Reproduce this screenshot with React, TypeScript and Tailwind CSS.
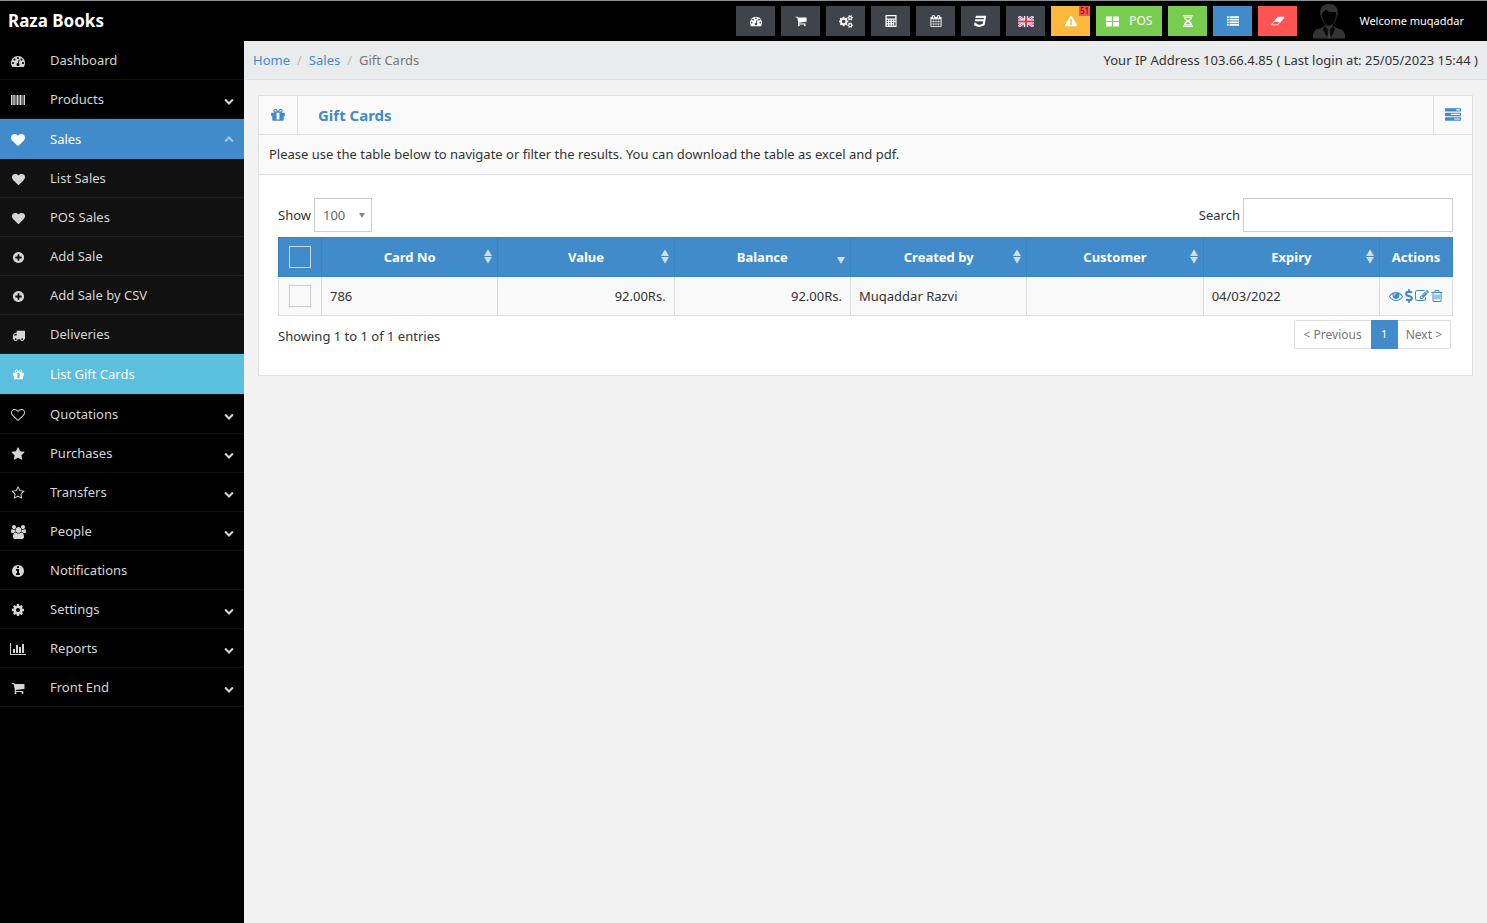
import React, { useState } from 'react';
import { FaCss3, FaDollarSign, FaExclamationTriangle } from 'react-icons/fa';
import clsx from 'clsx';

type Glyph = { width: number; d: string };

const GLYPHS: Record<string, Glyph> = {
  dashboard: { width: 1792, d: 'M384 1152q0-53-37.5-90.5t-90.5-37.5-90.5 37.5-37.5 90.5 37.5 90.5 90.5 37.5 90.5-37.5 37.5-90.5zm192-448q0-53-37.5-90.5t-90.5-37.5-90.5 37.5-37.5 90.5 37.5 90.5 90.5 37.5 90.5-37.5 37.5-90.5zm428 481l101-382q6-26-7.5-48.5t-38.5-29.5-48 6.5-30 39.5l-101 382q-60 5-107 43.5t-63 98.5q-20 77 20 146t117 89 146-20 89-117q16-60-6-117t-72-91zm660-33q0-53-37.5-90.5t-90.5-37.5-90.5 37.5-37.5 90.5 37.5 90.5 90.5 37.5 90.5-37.5 37.5-90.5zm-640-640q0-53-37.5-90.5t-90.5-37.5-90.5 37.5-37.5 90.5 37.5 90.5 90.5 37.5 90.5-37.5 37.5-90.5zm448 192q0-53-37.5-90.5t-90.5-37.5-90.5 37.5-37.5 90.5 37.5 90.5 90.5 37.5 90.5-37.5 37.5-90.5zm320 448q0 261-141 483-19 29-54 29h-1402q-35 0-54-29-141-221-141-483 0-182 71-348t191-286 286-191 348-71 348 71 286 191 191 286 71 348z' },
  barcode: { width: 1792, d: 'M0 256h192v1280h-192zM256 256h96v1280h-96zM416 256h96v1280h-96zM576 256h96v1280h-96zM736 256h192v1280h-192zM992 256h96v1280h-96zM1152 256h160v1280h-160zM1376 256h64v1280h-64zM1504 256h64v1280h-64zM1632 256h160v1280h-160z' },
  heart: { width: 1792, d: 'M896 1664q-26 0-44-18l-624-602q-10-8-27.5-26t-55.5-65.5-68-97.5-53.5-121-23.5-138q0-220 127-344t351-124q62 0 126.5 21.5t120 58 95.5 68.5 76 68q36-36 76-68t95.5-68.5 120-58 126.5-21.5q224 0 351 124t127 344q0 221-229 450l-623 600q-18 18-44 18z' },
  heartOutline: { width: 1792, d: 'M1664 596q0-81-21.5-143t-55-98.5-81.5-59.5-94-31-98-8-112 25.5-110.5 64-86.5 72-60 61.5q-18 22-49 22t-49-22q-24-28-60-61.5t-86.5-72-110.5-64-112-25.5-98 8-94 31-81.5 59.5-55 98.5-21.5 143q0 168 187 355l581 560 580-559q188-188 188-356zm128 0q0 221-229 450l-623 600q-18 18-44 18t-44-18l-624-602q-10-8-27.5-26t-55.5-65.5-68-97.5-53.5-121-23.5-138q0-220 127-344t351-124q62 0 126.5 21.5t120 58 95.5 68.5 76 68q36-36 76-68t95.5-68.5 120-58 126.5-21.5q224 0 351 124t127 344z' },
  plus: { width: 1792, d: 'M1344 960v-128q0-26-19-45t-45-19h-256v-256q0-26-19-45t-45-19h-128q-26 0-45 19t-19 45v256h-256q-26 0-45 19t-19 45v128q0 26 19 45t45 19h256v256q0 26 19 45t45 19h128q26 0 45-19t19-45v-256h256q26 0 45-19t19-45zm320-64q0 209-103 385.5t-279.5 279.5-385.5 103-385.5-103-279.5-279.5-103-385.5 103-385.5 279.5-279.5 385.5-103 385.5 103 279.5 279.5 103 385.5z' },
  truck: { width: 1792, d: 'M640 1408q0-52-38-90t-90-38-90 38-38 90 38 90 90 38 90-38 38-90zm-384-512h384v-256h-158q-13 0-22 9l-195 195q-9 9-9 22v30zm1280 512q0-52-38-90t-90-38-90 38-38 90 38 90 90 38 90-38 38-90zm256-1088v1024q0 15-4 26.5t-13.5 18.5-16.5 11.5-23.5 6-22.5 2-25.5 0-22.5-.5q0 106-75 181t-181 75-181-75-75-181h-384q0 106-75 181t-181 75-181-75-75-181h-64q-3 0-22.5.5t-25.5 0-22.5-2-23.5-6-16.5-11.5-13.5-18.5-4-26.5q0-26 19-45t45-19v-320q0-8-.5-35t0-38 2.5-34.5 6.5-37 14-30.5 22.5-30l198-198q19-19 50.5-32t58.5-13h160v-192q0-26 19-45t45-19h1024q26 0 45 19t19 45z' },
  gift: { width: 1792, d: 'M1055 1356v-716h-320v716q0 25 18 38.5t46 13.5h192q28 0 46-13.5t18-38.5zm-456-844h195l-126-161q-26-31-69-31-40 0-68 28t-28 68 28 68 68 28zm688-96q0-40-28-68t-68-28q-43 0-69 31l-125 161h194q40 0 68-28t28-68zm376 256v320q0 14-9 23t-23 9h-96v416q0 40-28 68t-68 28h-1088q-40 0-68-28t-28-68v-416h-96q-14 0-23-9t-9-23v-320q0-14 9-23t23-9h440q-93 0-158.5-65.5t-65.5-158.5 65.5-158.5 158.5-65.5q107 0 168 77l128 165 128-165q61-77 168-77 93 0 158.5 65.5t65.5 158.5-65.5 158.5-158.5 65.5h440q14 0 23 9t9 23z' },
  star: { width: 1792, d: 'M1728 647q0 22-26 48l-363 354 86 500q1 7 1 20 0 21-10.5 35.5t-30.5 14.5q-19 0-40-12l-449-236-449 236q-22 12-40 12-21 0-31.5-14.5t-10.5-35.5q0-6 2-20l86-500-364-354q-25-27-25-48 0-37 56-46l502-73 225-455q19-41 49-41t49 41l225 455 502 73q56 9 56 46z' },
  starOutline: { width: 1792, d: 'M1201 1004l306-297-422-62-189-382-189 382-422 62 306 297-73 421 378-199 377 199zm527-357q0 22-26 48l-363 354 86 500q1 7 1 20 0 50-41 50-19 0-40-12l-449-236-449 236q-22 12-40 12-21 0-31.5-14.5t-10.5-35.5q0-6 2-20l86-500-364-354q-25-27-25-48 0-37 56-46l502-73 225-455q19-41 49-41t49 41l225 455 502 73q56 9 56 46z' },
  people: { width: 1920, d: 'M593 896q-162 5-265 128h-134q-82 0-138-40.5t-56-118.5q0-353 124-353 6 0 43.5 21t97.5 42.5 119 21.5q67 0 133-23-5 37-5 66 0 139 81 256zm1071 637q0 120-73 189.5t-194 69.5h-874q-121 0-194-69.5t-73-189.5q0-53 3.5-103.5t14-109 26.5-108.5 43-97.5 62-81 85.5-53.5 111.5-20q10 0 43 21.5t73 48 107 48 135 21.5 135-21.5 107-48 73-48 43-21.5q61 0 111.5 20t85.5 53.5 62 81 43 97.5 26.5 108.5 14 109 3.5 103.5zm-1024-1277q0 106-75 181t-181 75-181-75-75-181 75-181 181-75 181 75 75 181zm704 384q0 159-112.5 271.5t-271.5 112.5-271.5-112.5-112.5-271.5 112.5-271.5 271.5-112.5 271.5 112.5 112.5 271.5zm576 225q0 78-56 118.5t-138 40.5h-134q-103-123-265-128 81-117 81-256 0-29-5-66 66 23 133 23 59 0 119-21.5t97.5-42.5 43.5-21q124 0 124 353zm-128-609q0 106-75 181t-181 75-181-75-75-181 75-181 181-75 181 75 75 181z' },
  info: { width: 1792, d: 'M1152 1376v-160q0-14-9-23t-23-9h-96v-512q0-14-9-23t-23-9h-320q-14 0-23 9t-9 23v160q0 14 9 23t23 9h96v320h-96q-14 0-23 9t-9 23v160q0 14 9 23t23 9h448q14 0 23-9t9-23zm-128-896v-160q0-14-9-23t-23-9h-192q-14 0-23 9t-9 23v160q0 14 9 23t23 9h192q14 0 23-9t9-23zm640 416q0 209-103 385.5t-279.5 279.5-385.5 103-385.5-103-279.5-279.5-103-385.5 103-385.5 279.5-279.5 385.5-103 385.5 103 279.5 279.5 103 385.5z' },
  cog: { width: 1792, d: 'M1152 896q0-106-75-181t-181-75-181 75-75 181 75 181 181 75 181-75 75-181zm512-109v222q0 12-8 23t-20 13l-185 28q-19 54-39 91 35 50 107 138 10 12 10 25t-9 23q-27 37-99 108t-94 71q-12 0-26-9l-138-108q-44 23-91 38-16 136-29 186-7 28-36 28h-222q-14 0-24.5-8.5t-11.5-21.5l-28-184q-49-16-90-37l-141 107q-10 9-25 9-14 0-25-11-126-114-165-168-7-10-7-23 0-12 8-23 15-21 51-66.5t54-70.5q-27-50-41-99l-183-27q-13-2-21-12.5t-8-23.5v-222q0-12 8-23t19-13l186-28q14-46 39-92-40-57-107-138-10-12-10-24 0-10 9-23 26-36 98.5-107.5t94.5-71.5q13 0 26 10l138 107q44-23 91-38 16-136 29-186 7-28 36-28h222q14 0 24.5 8.5t11.5 21.5l28 184q49 16 90 37l142-107q9-9 24-9 13 0 25 10 129 119 165 170 7 8 7 22 0 12-8 23-15 21-51 66.5t-54 70.5q26 50 41 98l183 28q13 2 21 12.5t8 23.5z' },
  cogs: { width: 1920, d: 'M896 896q0-106-75-181t-181-75-181 75-75 181 75 181 181 75 181-75 75-181zm768 512q0-52-38-90t-90-38-90 38-38 90q0 53 37.5 90.5t90.5 37.5 90.5-37.5 37.5-90.5zm0-1024q0-52-38-90t-90-38-90 38-38 90q0 53 37.5 90.5t90.5 37.5 90.5-37.5 37.5-90.5zm-384 421v185q0 10-7 19.5t-16 10.5l-155 24q-11 35-32 76 34 48 90 115 7 11 7 20 0 12-7 19-23 30-82.5 89.5t-78.5 59.5q-11 0-21-7l-115-90q-37 19-77 31-11 108-23 155-7 24-30 24h-186q-11 0-20-7.5t-10-17.5l-23-153q-34-10-75-31l-118 89q-7 7-20 7-11 0-21-8-144-133-144-160 0-9 7-19 10-14 41-53t47-61q-23-44-35-82l-152-24q-10-1-17-9.5t-7-19.5v-185q0-10 7-19.5t16-10.5l155-24q11-35 32-76-34-48-90-115-7-11-7-20 0-12 7-20 22-30 82-89t79-59q11 0 21 7l115 90q34-18 77-32 11-108 23-154 7-24 30-24h186q11 0 20 7.5t10 17.5l23 153q34 10 75 31l118-89q8-7 20-7 11 0 21 8 144 133 144 160 0 8-7 19-12 16-42 54t-45 60q23 48 34 82l152 23q10 2 17 10.5t7 19.5zm640 533v140q0 16-149 31-12 27-30 52 51 113 51 138 0 4-4 7-122 71-124 71-8 0-46-47t-52-68q-20 2-30 2t-30-2q-14 21-52 68t-46 47q-2 0-124-71-4-3-4-7 0-25 51-138-18-25-30-52-149-15-149-31v-140q0-16 149-31 13-29 30-52-51-113-51-138 0-4 4-7 4-2 35-20t59-34 30-16q8 0 46 46.5t52 67.5q20-2 30-2t30 2q51-71 92-112l6-2q4 0 124 70 4 3 4 7 0 25-51 138 17 23 30 52 149 15 149 31zm0-1024v140q0 16-149 31-12 27-30 52 51 113 51 138 0 4-4 7-122 71-124 71-8 0-46-47t-52-68q-20 2-30 2t-30-2q-14 21-52 68t-46 47q-2 0-124-71-4-3-4-7 0-25 51-138-18-25-30-52-149-15-149-31v-140q0-16 149-31 13-29 30-52-51-113-51-138 0-4 4-7 4-2 35-20t59-34 30-16q8 0 46 46.5t52 67.5q20-2 30-2t30 2q51-71 92-112l6-2q4 0 124 70 4 3 4 7 0 25-51 138 17 23 30 52 149 15 149 31z' },
  chart: { width: 2048, d: 'M640 896v512h-256v-512h256zm384-512v1024h-256v-1024h256zm1024 1152v128h-2048v-1536h128v1408h1920zm-640-896v768h-256v-768h256zm384-384v1152h-256v-1152h256z' },
  cart: { width: 1792, d: 'M704 1536q0 52-38 90t-90 38-90-38-38-90 38-90 90-38 90 38 38 90zm896 0q0 52-38 90t-90 38-90-38-38-90 38-90 90-38 90 38 38 90zm128-1088v512q0 24-16.5 42.5t-40.5 21.5l-1044 122q13 60 13 70 0 16-24 64h920q26 0 45 19t19 45-19 45-45 19h-1024q-26 0-45-19t-19-45q0-11 8-31.5t16-36 21.5-40 15.5-29.5l-177-823h-204q-26 0-45-19t-19-45 19-45 45-19h256q16 0 28.5 6.5t19.5 15.5 13 24.5 8 26 5.5 29.5 4.5 26h1201q26 0 45 19t19 45z' },
  chevron: { width: 1792, d: 'M1683 808l-742 741q-19 19-45 19t-45-19l-742-741q-19-19-19-45.5t19-45.5l166-165q19-19 45-19t45 19l531 531 531-531q19-19 45-19t45 19l166 165q19 19 19 45.5t-19 45.5z' },
  calculator: { width: 1792, d: 'M128 0h1536q64 0 64 64v1664q0 64-64 64h-1536q-64 0-64-64v-1664q0-64 64-64zM256 192v320h1280v-320zM256 704v192h192v-192zM640 704v192h192v-192zM1024 704v192h192v-192zM1376 704v192h192v-192zM256 1056v192h192v-192zM640 1056v192h192v-192zM1024 1056v192h192v-192zM1376 1056v544h192v-544zM256 1408v192h192v-192zM640 1408v192h192v-192zM1024 1408v192h192v-192z' },
  calendar: { width: 1792, d: 'M192 1664h288v-288h-288v288zm352 0h320v-288h-320v288zm-352-352h288v-320h-288v320zm352 0h320v-320h-320v320zm-352-384h288v-288h-288v288zm736 736h320v-288h-320v288zm-384-736h320v-288h-320v288zm768 736h288v-288h-288v288zm-384-352h320v-320h-320v320zm-352-864v-288q0-13-9.5-22.5t-22.5-9.5h-64q-13 0-22.5 9.5t-9.5 22.5v288q0 13 9.5 22.5t22.5 9.5h64q13 0 22.5-9.5t9.5-22.5zm736 864h288v-320h-288v320zm-384-384h320v-288h-320v288zm384 0h288v-288h-288v288zm32-480v-288q0-13-9.5-22.5t-22.5-9.5h-64q-13 0-22.5 9.5t-9.5 22.5v288q0 13 9.5 22.5t22.5 9.5h64q13 0 22.5-9.5t9.5-22.5zm384-64v1280q0 52-38 90t-90 38h-1408q-52 0-90-38t-38-90v-1280q0-52 38-90t90-38h128v-96q0-66 47-113t113-47h64q66 0 113 47t47 113v96h384v-96q0-66 47-113t113-47h64q66 0 113 47t47 113v96h128q52 0 90 38t38 90z' },
  tiles: { width: 1792, d: 'M0 192h832v640h-832zM960 192h832v640h-832zM0 960h832v640h-832zM960 960h832v640h-832z' },
  hourglass: { width: 1792, d: 'M192 0h1408v224h-1408zM192 1568h1408v224h-1408zM288 288h1216q0 400-400 608 400 208 400 608h-1216q0-400 400-608-400-208-400-608zM480 416q80 220 416 380 336-160 416-380zM896 1050q-270 130-330 330h660q-60-200-330-330z' },
  list: { width: 1792, d: 'M0 192h256v256h-256zM384 192h1408v256h-1408zM0 576h256v256h-256zM384 576h1408v256h-1408zM0 960h256v256h-256zM384 960h1408v256h-1408zM0 1344h256v256h-256zM384 1344h1408v256h-1408z' },
  eraser: { width: 2048, d: 'M960 1408l336-384h-768l-336 384h768zm1013-1077q15 34 9.5 71.5t-30.5 65.5l-896 1024q-38 44-96 44h-768q-38 0-69.5-20.5t-47.5-54.5q-15-34-9.5-71.5t30.5-65.5l896-1024q38-44 96-44h768q38 0 69.5 20.5t47.5 54.5z' },
  tasks: { width: 1792, d: 'M1024 1408h640v-128h-640v128zm-384-512h1024v-128h-1024v128zm640-512h384v-128h-384v128zm512 832v256q0 26-19 45t-45 19h-1664q-26 0-45-19t-19-45v-256q0-26 19-45t45-19h1664q26 0 45 19t19 45zm0-512v256q0 26-19 45t-45 19h-1664q-26 0-45-19t-19-45v-256q0-26 19-45t45-19h1664q26 0 45 19t19 45zm0-512v256q0 26-19 45t-45 19h-1664q-26 0-45-19t-19-45v-256q0-26 19-45t45-19h1664q26 0 45 19t19 45z' },
  eye: { width: 1792, d: 'M1664 960q-152-236-381-353 61 104 61 225 0 185-131.5 316.5t-316.5 131.5-316.5-131.5-131.5-316.5q0-121 61-225-229 117-381 353 133 205 333.5 326.5t434.5 121.5 434.5-121.5 333.5-326.5zm-720-384q0-20-14-34t-34-14q-125 0-214.5 89.5t-89.5 214.5q0 20 14 34t34 14 34-14 14-34q0-86 61-147t147-61q20 0 34-14t14-34zm848 384q0 34-20 69-140 230-376.5 368.5t-499.5 138.5-499.5-139-376.5-368q-20-35-20-69t20-69q140-229 376.5-368t499.5-139 499.5 139 376.5 368q20 35 20 69z' },
  edit: { width: 1792, d: 'M888 1184l116-116-152-152-116 116v56h96v96h56zm440-720q-16-16-33 1l-350 350q-17 17-1 33t33-1l350-350q17-17 1-33zm80 594v190q0 119-84.5 203.5t-203.5 84.5h-832q-119 0-203.5-84.5t-84.5-203.5v-832q0-119 84.5-203.5t203.5-84.5h832q63 0 117 25 15 7 18 23 3 17-9 29l-49 49q-14 14-32 8-23-6-45-6h-832q-66 0-113 47t-47 113v832q0 66 47 113t113 47h832q66 0 113-47t47-113v-126q0-13 9-22l64-64q15-15 35-7t20 29zm-96-738l288 288-672 672h-288v-288zm444 132l-92 92-288-288 92-92q28-28 68-28t68 28l152 152q28 28 28 68t-28 68z' },
  trash: { width: 1792, d: 'M704 736v576q0 14-9 23t-23 9h-64q-14 0-23-9t-9-23v-576q0-14 9-23t23-9h64q14 0 23 9t9 23zm256 0v576q0 14-9 23t-23 9h-64q-14 0-23-9t-9-23v-576q0-14 9-23t23-9h64q14 0 23 9t9 23zm256 0v576q0 14-9 23t-23 9h-64q-14 0-23-9t-9-23v-576q0-14 9-23t23-9h64q14 0 23 9t9 23zm128 724v-948h-896v948q0 22 7 40.5t14.5 27 10.5 8.5h832q3 0 10.5-8.5t14.5-27 7-40.5zm-672-1076h448l-48-117q-7-9-17-11h-317q-10 2-17 11zm928 32v64q0 14-9 23t-23 9h-96v948q0 83-47 143.5t-113 60.5h-832q-66 0-113-58.5t-47-141.5v-952h-96q-14 0-23-9t-9-23v-64q0-14 9-23t23-9h309l70-167q15-37 54-63t79-26h320q40 0 79 26t54 63l70 167h309q14 0 23 9t9 23z' },
};

function Icon({ name, className }: { name: string; className?: string }) {
  const { width, d } = GLYPHS[name];
  return (
    <svg viewBox={`0 0 ${width} 1792`} fill="currentColor" fillRule="evenodd" aria-hidden="true" className={clsx('shrink-0', className)}>
      <path d={d} />
    </svg>
  );
}

function Flag() {
  return (
    <svg viewBox="0 0 16 11" aria-hidden="true" className="h-[11px] w-4">
      <rect width="16" height="11" fill="#3d5aa8" />
      <path d="M0 0L16 11M16 0L0 11" stroke="#fff" strokeWidth="2.4" />
      <path d="M0 0L16 11M16 0L0 11" stroke="#e0455a" strokeWidth="0.9" />
      <path d="M8 0V11M0 5.5H16" stroke="#fff" strokeWidth="4" />
      <path d="M8 0V11M0 5.5H16" stroke="#e0364c" strokeWidth="2" />
    </svg>
  );
}

function Avatar() {
  return (
    <svg viewBox="0 0 34 36" aria-hidden="true" className="h-9 w-[34px]">
      <path d="M1 35.500C.5 30 2 27.500 6 26c4-1.300 5.500-1.800 6.500-3.500h9c1 1.700 2.500 2.200 6.500 3.500 4 1.500 5.500 4 5 9.500z" fill="#343434" />
      <path d="M12.500 23L17 27.500l4.500-4.500 1.500 3.500-4.500 9h-3l-4.500-9z" fill="#0a0a0a" />
      <path d="M15.500 27.500h3l-.7 2 1.200 6h-4l1.200-6z" fill="#404040" />
      <path d="M9.500 10c0 7.500 3 13 7.500 13s7.500-5.500 7.500-13" fill="#020202" stroke="#2e2e2e" />
      <path d="M8.500 13C7.300 5 10 1 17 1s9.700 4 8.500 12l-2-4c-4 .5-8-.5-10-2.500-1 2-2 2.500-3 3z" fill="#343434" />
    </svg>
  );
}

type MenuItem = { label: string; icon: string; expandable?: boolean };

const SALES_ITEMS: MenuItem[] = [
  { label: 'List Sales', icon: 'heart' },
  { label: 'POS Sales', icon: 'heart' },
  { label: 'Add Sale', icon: 'plus' },
  { label: 'Add Sale by CSV', icon: 'plus' },
  { label: 'Deliveries', icon: 'truck' },
  { label: 'List Gift Cards', icon: 'gift' },
];

const MENU: MenuItem[] = [
  { label: 'Dashboard', icon: 'dashboard' },
  { label: 'Products', icon: 'barcode', expandable: true },
  { label: 'Sales', icon: 'heart', expandable: true },
  { label: 'Quotations', icon: 'heartOutline', expandable: true },
  { label: 'Purchases', icon: 'star', expandable: true },
  { label: 'Transfers', icon: 'starOutline', expandable: true },
  { label: 'People', icon: 'people', expandable: true },
  { label: 'Notifications', icon: 'info' },
  { label: 'Settings', icon: 'cog', expandable: true },
  { label: 'Reports', icon: 'chart', expandable: true },
  { label: 'Front End', icon: 'cart', expandable: true },
];

function Sidebar() {
  const [open, setOpen] = useState('Sales');

  return (
    <nav aria-label="Main menu" className="w-[244px] shrink-0 bg-black text-[#d5d5d5]">
      <ul>
        {MENU.map(({ label, icon, expandable }) => {
          const isOpen = open === label;
          return (
            <li key={label}>
              <a
                href="#"
                onClick={() => expandable && setOpen(isOpen ? '' : label)}
                className={clsx(
                  'flex items-center border-b pr-[10px] pl-[9px]',
                  isOpen ? 'h-10 border-[#428bca] bg-[#428bca] text-white' : 'h-[39px] border-[#121212]'
                )}
              >
                <span className="flex w-[18px] justify-center pt-[2px]"><Icon name={icon} className="h-[14px]" /></span>
                <span className="ml-[23px] flex-1">{label}</span>
                {expandable ? <Icon name="chevron" className={clsx('mt-[3px] size-[10px]', isOpen && 'rotate-180 text-[#a9c3dc]')} /> : null}
              </a>
              {
                isOpen && label === 'Sales' ?
                  <ul className="bg-[#111111] pb-px">
                    {SALES_ITEMS.map(item => (
                      <li key={item.label}>
                        <a
                          href="#"
                          className={clsx(
                            'flex items-center border-b px-[9px]',
                            item.label === 'List Gift Cards' ? 'h-10 border-[#5bc0de] bg-[#5bc0de] text-white' : 'h-[39px] border-[#1e1e1e]'
                          )}
                        >
                          <span className="flex w-[18px] justify-center pt-[2px]"><Icon name={item.icon} className="h-[13px]" /></span>
                          <span className="ml-[23px]">{item.label}</span>
                        </a>
                      </li>
                    ))}
                  </ul> :
                  null
              }
            </li>
          );
        })}
      </ul>
    </nav>
  );
}

function TopButton({ label, className, children }: { label: string; className: string; children: React.ReactNode }) {
  return (
    <button type="button" aria-label={label} className={clsx('relative flex h-[30px] min-w-[39px] items-center justify-center text-white', className)}>
      {children}
    </button>
  );
}

const DARK = 'bg-[#3f434a]';

function TopBar() {
  return (
    <header className="flex h-[41px] items-center border-t border-[#8a8f8f] bg-black pr-[23px] pl-2 text-white">
      <a href="#" className="mr-auto text-[17px] font-bold">Raza Books</a>
      <div className="flex gap-[6px]">
        <TopButton label="Dashboard" className={DARK}><Icon name="dashboard" className="h-3" /></TopButton>
        <TopButton label="Shop" className={DARK}><Icon name="cart" className="h-3" /></TopButton>
        <TopButton label="Settings" className={DARK}><Icon name="cogs" className="h-[13px]" /></TopButton>
        <TopButton label="Calculator" className={DARK}><Icon name="calculator" className="h-3" /></TopButton>
        <TopButton label="Calendar" className={DARK}><Icon name="calendar" className="h-3" /></TopButton>
        <TopButton label="Styles" className={DARK}><FaCss3 className="size-[13px]" /></TopButton>
        <TopButton label="Language" className={DARK}><Flag /></TopButton>
        <TopButton label="Alerts" className="bg-[#fdb93e]">
          <FaExclamationTriangle className="size-3" />
          <span className="absolute top-0 right-0 h-[10px] bg-[#fa5252] px-px text-[8px] leading-[10px] text-[#3a0a0a]">51</span>
        </TopButton>
        <TopButton label="POS" className="gap-[10px] bg-[#78cd51] px-[10px] text-xs"><Icon name="tiles" className="h-[13px]" />POS</TopButton>
        <TopButton label="Profit" className="bg-[#78cd51]"><Icon name="hourglass" className="h-3" /></TopButton>
        <TopButton label="Registers" className="bg-[#428bca]"><Icon name="list" className="h-3" /></TopButton>
        <TopButton label="Clear" className="bg-[#ff5454]"><Icon name="eraser" className="h-3" /></TopButton>
      </div>
      <a href="#" className="ml-[15px] flex items-center gap-[13px] text-[11px]">
        <Avatar />
        Welcome muqaddar
      </a>
    </header>
  );
}

function SortArrows({ descending }: { descending?: boolean }) {
  return (
    <svg viewBox="0 0 8 16" fill="#d5dde6" aria-hidden="true" className="h-4 w-2 shrink-0">
      {descending ? null : <path d="M4 0.500L8 7H0z" />}
      <path d={descending ? 'M0 8H8L4 15z' : 'M0 8H8L4 14.500z'} />
    </svg>
  );
}

const COLUMNS = ['Card No', 'Value', 'Balance', 'Created by', 'Customer', 'Expiry'];
const HEAD_CELL = 'border border-[#3a83c2] font-bold';
const BODY_CELL = 'border border-[#dddddd] px-2';

function GiftCardsTable() {
  return (
    <table className="mt-[5px] w-full table-fixed border-collapse">
      <colgroup>
        <col className="w-[43px]" />
        {COLUMNS.map(column => <col key={column} />)}
        <col className="w-[73px]" />
      </colgroup>
      <thead className="bg-[#428bca] text-white">
        <tr className="h-[39px]">
          <th className={HEAD_CELL}>
            <input type="checkbox" aria-label="Select all" className="mx-auto block size-[22px] appearance-none border border-[#c8d8e6]" />
          </th>
          {COLUMNS.map(column => (
            <th key={column} scope="col" className={HEAD_CELL}>
              <div className="flex items-center pr-[5px]">
                <span className="flex-1 pl-[13px]">{column}</span>
                <SortArrows descending={column === 'Balance'} />
              </div>
            </th>
          ))}
          <th scope="col" className={HEAD_CELL}>Actions</th>
        </tr>
      </thead>
      <tbody className="bg-[#f9f9f9]">
        <tr className="h-[39px]">
          <td className={BODY_CELL}>
            <input type="checkbox" aria-label="Select card 786" className="mx-auto block size-[22px] appearance-none border border-[#cccccc]" />
          </td>
          <td className={BODY_CELL}>786</td>
          <td className={clsx(BODY_CELL, 'text-right')}>92.00Rs.</td>
          <td className={clsx(BODY_CELL, 'text-right')}>92.00Rs.</td>
          <td className={BODY_CELL}>Muqaddar Razvi</td>
          <td className={BODY_CELL} />
          <td className={BODY_CELL}>04/03/2022</td>
          <td className="border border-[#dddddd]">
            <div className="flex items-center justify-center gap-px text-[#428bca]">
              <a href="#" aria-label="View gift card"><Icon name="eye" className="size-[14px]" /></a>
              <a href="#" aria-label="Top up gift card"><FaDollarSign className="h-[14px] w-[10px]" /></a>
              <a href="#" aria-label="Edit gift card"><Icon name="edit" className="size-[14px]" /></a>
              <a href="#" aria-label="Delete gift card"><Icon name="trash" className="size-[14px]" /></a>
            </div>
          </td>
        </tr>
      </tbody>
    </table>
  );
}

function App() {
  const [search, setSearch] = useState('');

  return (
    <div className="flex min-h-screen flex-col bg-[#f2f2f2] font-['Noto_Sans',sans-serif] text-[13px] leading-5 text-[#333333]">
      <TopBar />
      <div className="flex flex-1">
        <Sidebar />
        <main className="min-w-0 flex-1">
          <div className="flex h-[39px] items-center justify-between border-b border-[#e0e1e3] bg-[#e9ebec] px-[9px]">
            <nav aria-label="Breadcrumb" className="flex gap-[7px]">
              <a href="#" className="text-[#428bca]">Home</a>
              <span className="text-[#bbbbbb]">/</span>
              <a href="#" className="text-[#428bca]">Sales</a>
              <span className="text-[#bbbbbb]">/</span>
              <span className="text-[#777777]">Gift Cards</span>
            </nav>
            <p>Your IP Address 103.66.4.85 ( Last login at: 25/05/2023 15:44 )</p>
          </div>

          <section className="mx-[14px] mt-[15px] border border-[#dfe0e1] bg-white">
            <div className="flex h-[39px] items-center border-b border-[#dfe0e1] bg-[#fafafa] text-[#428bca]">
              <span className="flex w-[39px] items-center justify-center self-stretch border-r border-[#dfe0e1]"><Icon name="gift" className="h-4" /></span>
              <h2 className="ml-5 flex-1 text-[15px] font-bold">Gift Cards</h2>
              <button type="button" aria-label="Actions" className="flex w-[39px] items-center justify-center self-stretch border-l border-[#dfe0e1]"><Icon name="tasks" className="h-4" /></button>
            </div>
            <p className="border-b border-[#dfe0e1] bg-[#fafafa] px-[10px] pt-[9px] pb-[10px]">
              Please use the table below to navigate or filter the results. You can download the table as excel and pdf.
            </p>
            <div className="px-[19px] pt-[23px] pb-[26px]">
              <div className="flex items-center justify-between">
                <label className="flex items-center gap-[3px]">
                  Show
                  <span className="relative">
                    <select className="h-[34px] w-[58px] appearance-none border border-[#cccccc] bg-white px-2 text-[#666666]" defaultValue="100">
                      <option>10</option>
                      <option>25</option>
                      <option>50</option>
                      <option>100</option>
                    </select>
                    <svg viewBox="0 0 6 5" fill="#888888" aria-hidden="true" className="pointer-events-none absolute top-[15px] right-[7px] h-[5px] w-[6px]"><path d="M0 0H6L3 5z" /></svg>
                  </span>
                </label>
                <label className="flex items-center gap-[3px]">
                  Search
                  <input type="text" value={search} onChange={event => setSearch(event.target.value)} className="h-[34px] w-[210px] border border-[#cccccc] bg-white px-2" />
                </label>
              </div>
              <GiftCardsTable />
              <div className="flex items-start justify-between pt-1">
                <p className="pt-[6px]">Showing 1 to 1 of 1 entries</p>
                <div className="mr-[2px] flex h-[29px] items-stretch rounded-xs border border-[#dddddd] text-xs text-[#777777]">
                  <button type="button" className="px-[9px]">&lt; Previous</button>
                  <button type="button" aria-current="page" className="-my-px w-[27px] bg-[#428bca] text-[11px] text-white">1</button>
                  <button type="button" className="px-2">Next &gt;</button>
                </div>
              </div>
            </div>
          </section>
        </main>
      </div>
    </div>
  );
}

export default App;
